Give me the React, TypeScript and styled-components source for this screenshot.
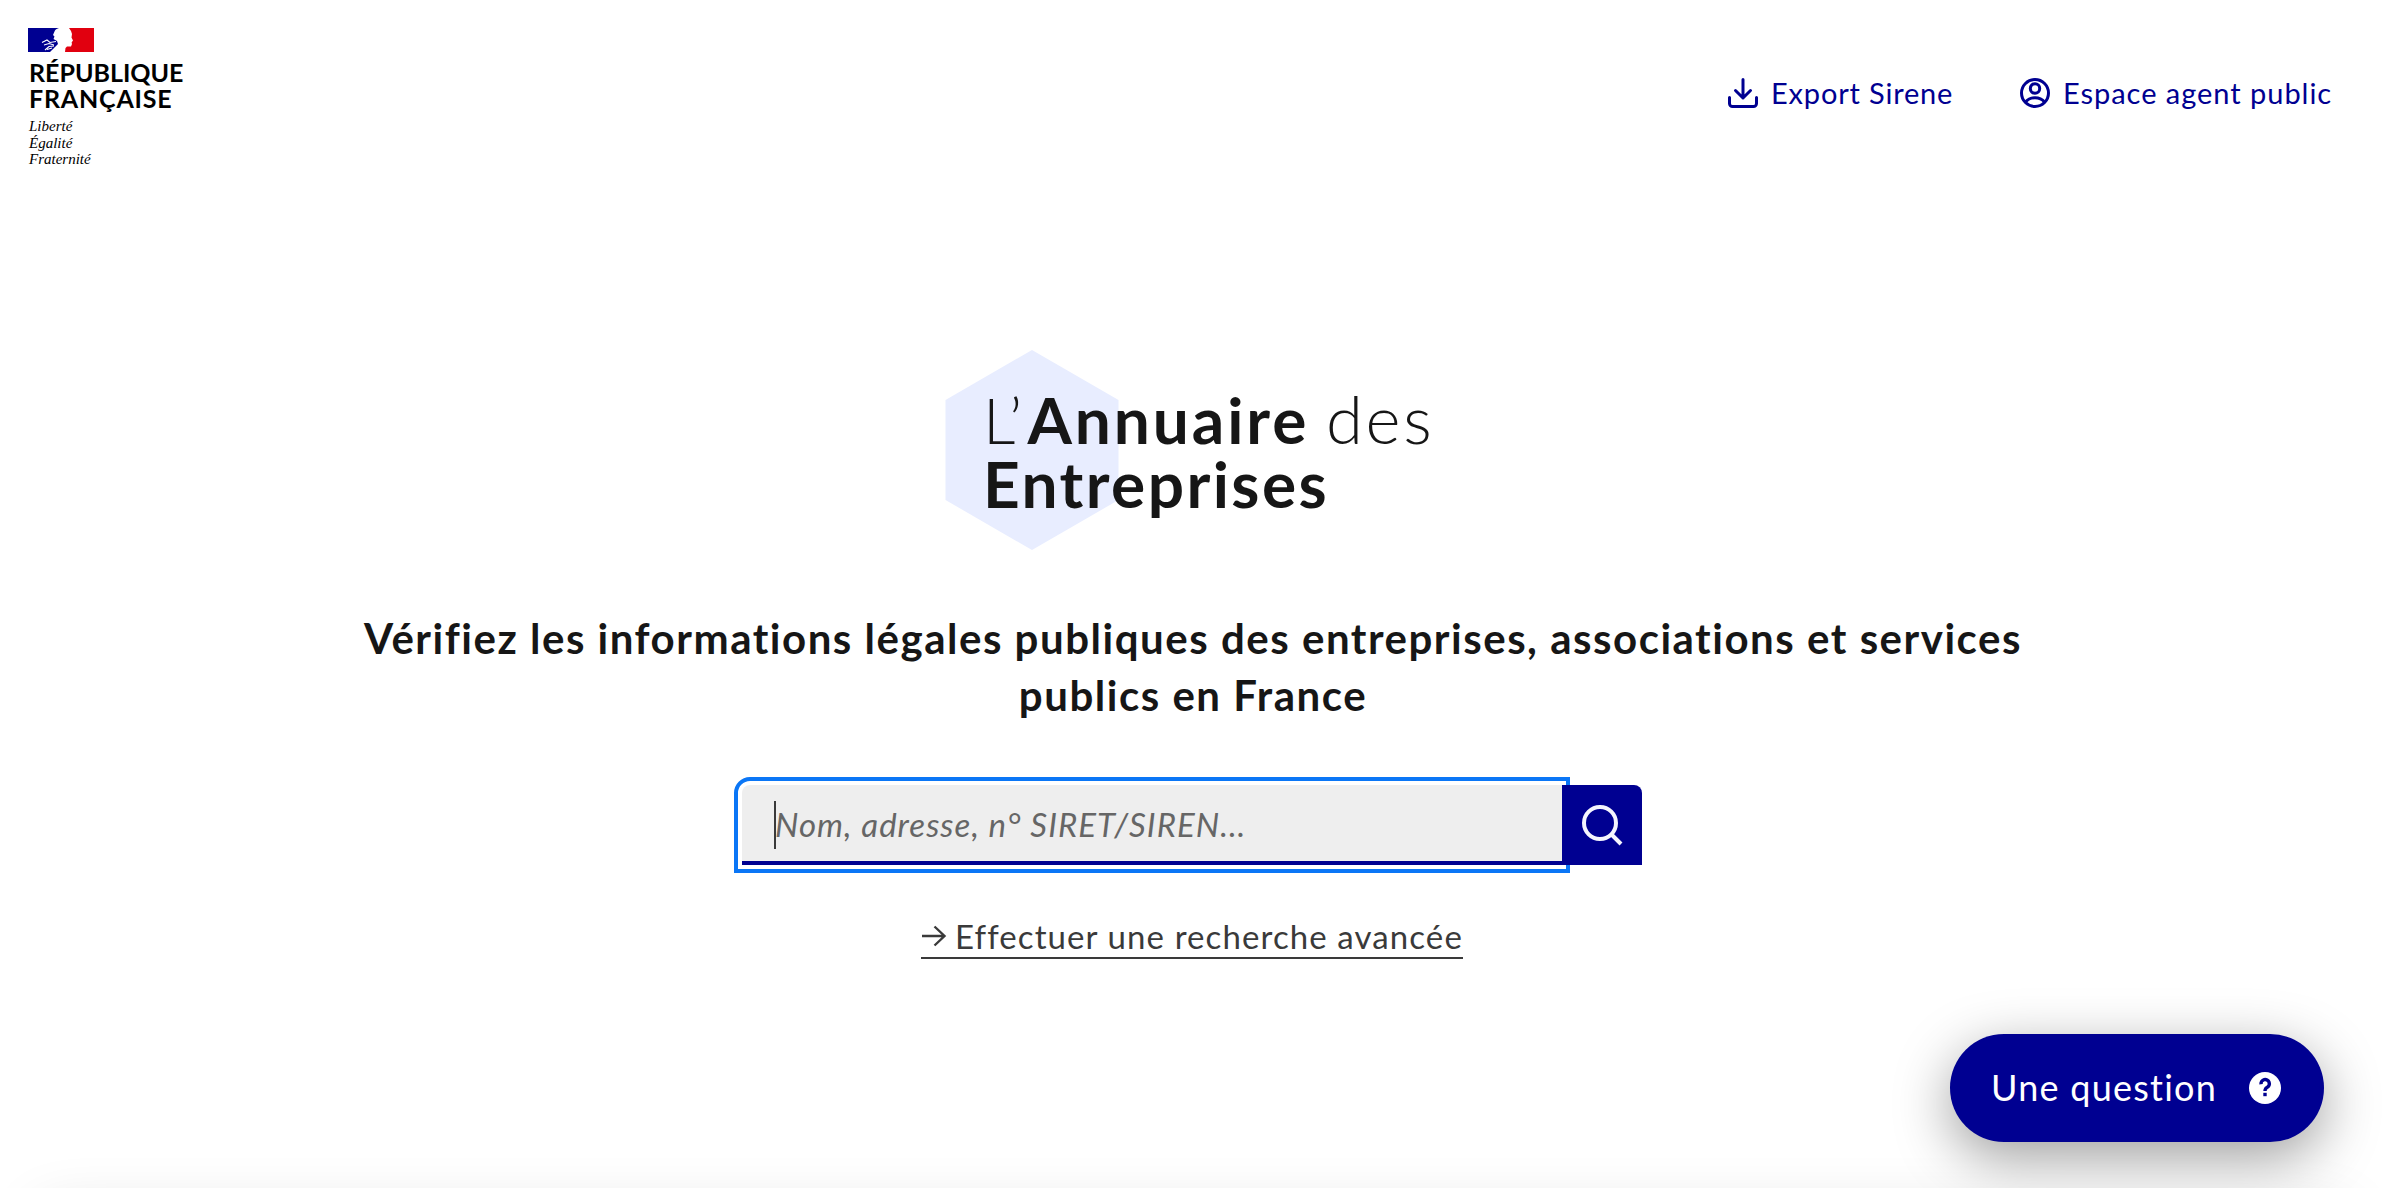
import React from "react";
import styled, { createGlobalStyle } from "styled-components";

const blue = "#000091";

const Global = createGlobalStyle`
  * { box-sizing: border-box; }
  html, body { margin: 0; background: #fff; }
  body { font-family: Lato, "Open Sans", sans-serif; color: #161616; overflow: hidden; }
`;

const Page = styled.div`
  position: relative;
  height: 1188px;
  overflow: hidden;
  display: flex;
  flex-direction: column;
`;

const Header = styled.header`
  height: 190px;
  flex: none;
  display: flex;
  justify-content: space-between;
  padding: 28px 54px 0 28px;
`;

const Brand = styled.div`
  display: flex;
  flex-direction: column;
  color: #000;
`;

const Flag = styled.svg`
  width: 66px;
  height: 24px;
  display: block;
`;

const State = styled.div<{ $spacing: number }>`
  font-size: 25px;
  line-height: 26px;
  font-weight: 700;
  letter-spacing: ${(p) => p.$spacing}px;
  padding-left: 1px;
  white-space: nowrap;
`;

const StateBlock = styled.div`
  margin-top: 7px;
`;

const Motto = styled.div`
  margin-top: 7px;
  padding-left: 1px;
  font-family: "Liberation Serif", serif;
  font-style: italic;
  font-size: 15px;
  line-height: 16.5px;
  white-space: nowrap;
`;

const Nav = styled.nav`
  display: flex;
  align-items: center;
  gap: 66px;
  height: 130px;
`;

const NavLink = styled.a<{ $spacing: number; $width: number }>`
  display: flex;
  align-items: center;
  gap: 13px;
  width: ${(p) => p.$width}px;
  color: ${blue};
  font-size: 29px;
  line-height: 48px;
  letter-spacing: ${(p) => p.$spacing}px;
  white-space: nowrap;
  svg { flex: none; }
`;

const Hero = styled.main`
  flex: 0 0 1022px;
  display: flex;
  flex-direction: column;
  align-items: center;
`;

const Logo = styled.svg`
  margin-top: 160px;
  width: 496px;
  height: 200px;
  display: block;
`;

const Title = styled.h1`
  margin: 60px 0 0;
  width: 1720px;
  text-align: center;
  font-size: 42px;
  line-height: 57px;
  font-weight: 700;
  letter-spacing: 1.52px;
`;

const Search = styled.form`
  margin: 61px 2px 0 0;
  display: flex;
  width: 900px;
  height: 80px;
`;

const Field = styled.div`
  flex: 1;
  display: flex;
  align-items: center;
  padding: 4px 32px 0;
  background: #eee;
  border-bottom: 4px solid ${blue};
  border-radius: 8px 0 0 0;
  outline: 4px solid #0a76f6;
  outline-offset: 4px;
`;

const Caret = styled.span`
  width: 2px;
  height: 48px;
  background: #3a3a3a;
`;

const Placeholder = styled.span`
  margin: -3px 0 0 -1px;
  font-size: 33px;
  line-height: 48px;
  font-style: italic;
  color: #666;
  letter-spacing: 1.02px;
  white-space: nowrap;
`;

const SearchButton = styled.button`
  position: relative;
  width: 80px;
  height: 80px;
  padding: 0;
  border: 0;
  background: ${blue};
  border-radius: 0 8px 0 0;
  svg { display: block; }
`;

const Advanced = styled.a`
  margin: 44px 2px 0 0;
  padding-top: 5px;
  height: 50px;
  width: 542px;
  display: flex;
  align-items: center;
  border-bottom: 2px solid #3a3a3a;
  color: #3a3a3a;
  font-size: 33px;
  line-height: 40px;
  letter-spacing: 1.1px;
  white-space: nowrap;
  svg { flex: none; margin-right: 8px; }
`;

const NextSection = styled.section`
  flex: none;
  height: 60px;
  margin: 0 40px;
  background: #fff;
  box-shadow: 0 0 60px rgba(0, 0, 0, 0.14);
`;

const Help = styled.button`
  position: absolute;
  left: 1950px;
  top: 1034px;
  width: 374px;
  height: 108px;
  padding: 0 43px 0 41px;
  border: 0;
  border-radius: 54px;
  background: ${blue};
  color: #fff;
  display: flex;
  align-items: center;
  justify-content: space-between;
  font-family: inherit;
  font-size: 36px;
  letter-spacing: 1.25px;
  white-space: nowrap;
  box-shadow: 0 16px 56px rgba(0, 0, 0, 0.38);
`;

const HelpLabel = styled.span`
  margin-top: -3px;
`;

export default function App() {
  return (
    <Page>
      <Global />
      <Header>
        <Brand>
          <Flag viewBox="0 0 66 24">
            <path d="M0 0H31C28 1 27 2 26.500 3.500L25 7L26.500 8.500L25.500 11L29 13L30 16L27 19L24 22L22 24H0Z" fill={blue} />
            <path d="M41 0H66V24H37L37.500 20L39 18.500H43L44 16L43.600 14.500L45 12.500L43.500 9.500L44 6L43 3Z" fill="#e1000f" />
            <path d="M14 14.500L19 12L22 14.500L28 13.500M16 17L21 15.500L26 17M17 22L21 18.500L26 18M19 21.500L24 20" fill="none" stroke="#fff" strokeWidth="1.100" />
          </Flag>
          <StateBlock>
            <State $spacing={0}>RÉPUBLIQUE</State>
            <State $spacing={0.8}>FRANÇAISE</State>
          </StateBlock>
          <Motto>
            Liberté
            <br />
            Égalité
            <br />
            Fraternité
          </Motto>
        </Brand>
        <Nav>
          <NavLink $spacing={0.82} $width={226}>
            <svg width="30" height="30" viewBox="0 0 30 30" fill="none" stroke={blue} strokeWidth="3" strokeLinecap="round" strokeLinejoin="round">
              <path d="M15 1.500V20M7.500 12.500L15 20L22.500 12.500M1.500 19.500V25.500A3 3 0 0 0 4.500 28.500H25.500A3 3 0 0 0 28.500 25.500V19.500" />
            </svg>
            Export Sirene
          </NavLink>
          <NavLink $spacing={0.97} $width={312}>
            <svg width="30" height="30" viewBox="0 0 30 30" fill="none" stroke={blue} strokeWidth="3">
              <circle cx="15" cy="15" r="13.500" />
              <circle cx="15" cy="10.500" r="4.700" />
              <path d="M5.500 24C10 18.200 20 18.200 24.500 24" />
            </svg>
            Espace agent public
          </NavLink>
        </Nav>
      </Header>
      <Hero>
        <Logo viewBox="0 0 496 200" fontFamily="Lato, sans-serif" fontSize="64" fill="#161616">
          <path d="M87 0L173.500 50V150L87 200L0.500 150V50Z" fill="#e8edff" />
          <text x="38" y="94" fontWeight="300">L’</text>
          <text x="82.500" y="94" fontWeight="700" letterSpacing="2.900">Annuaire</text>
          <text x="381" y="94" fontWeight="300" fontSize="67" letterSpacing="2.700">des</text>
          <text x="38" y="158" fontWeight="700" letterSpacing="2.400">Entreprises</text>
        </Logo>
        <Title>
          Vérifiez les informations légales publiques des entreprises, associations et services
          <br />
          publics en France
        </Title>
        <Search>
          <Field>
            <Caret />
            <Placeholder>Nom, adresse, n° SIRET/SIREN...</Placeholder>
          </Field>
          <SearchButton type="button" aria-label="Rechercher">
            <svg width="80" height="80" viewBox="0 0 80 80" fill="none" stroke="#f5f5fe" strokeWidth="4">
              <circle cx="38" cy="38" r="16" />
              <path d="M49.500 49.500L59 59" />
            </svg>
          </SearchButton>
        </Search>
        <Advanced>
          <svg width="26" height="24" viewBox="0 0 26 24" fill="none" stroke="#3a3a3a" strokeWidth="2.400">
            <path d="M1 12H23M13.500 2.500L23.500 12L13.500 21.500" />
          </svg>
          Effectuer une recherche avancée
        </Advanced>
      </Hero>
      <NextSection />
      <Help type="button">
        <HelpLabel>Une question</HelpLabel>
        <svg width="32" height="32" viewBox="0 0 32 32" fill="none">
          <circle cx="16" cy="16" r="16" fill="#fff" />
          <path d="M12 12.300A4.200 4.200 0 1 1 18 15.500Q16 16.500 16 19" stroke={blue} strokeWidth="3.400" />
          <path d="M14.300 20.800H17.700V24.200H14.300Z" fill={blue} />
        </svg>
      </Help>
    </Page>
  );
}
